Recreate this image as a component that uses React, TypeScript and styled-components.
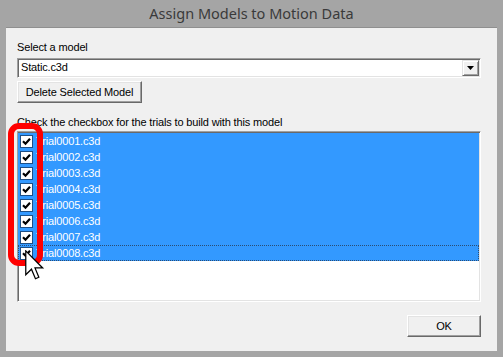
import React from "react";
import styled, { createGlobalStyle } from "styled-components";

const GlobalStyle = createGlobalStyle`
  html, body {
    margin: 0;
    padding: 0;
  }
  body {
    background: #a5a5a5;
    font-family: "Liberation Sans", Arial, sans-serif;
  }
`;

const Window = styled.div`
  position: relative;
  width: 503px;
  height: 357px;
  box-sizing: border-box;
  padding-bottom: 6px;
  display: flex;
  flex-direction: column;
  background: #a5a5a5;
  overflow: hidden;
`;

const TitleBar = styled.div`
  height: 28px;
  line-height: 27px;
  text-align: center;
  font-family: "Noto Sans", "Open Sans", sans-serif;
  font-size: 14.5px;
  color: #3a3a3a;
`;

const Client = styled.div`
  flex: 1;
  margin: -1px 6px 0;
  padding: 12px 16px 0 11px;
  display: flex;
  flex-direction: column;
  background: #f0f0f0;
  border-top: 1px solid #8f8f8f;
  font-size: 11px;
  letter-spacing: -0.15px;
  color: #000;
`;

const FieldLabel = styled.div<{ $gap?: number }>`
  margin-top: ${(p) => p.$gap ?? 0}px;
  line-height: 14px;
  white-space: nowrap;
`;

const ComboBox = styled.div`
  margin-top: 4px;
  height: 20px;
  box-sizing: border-box;
  display: flex;
  align-items: stretch;
  background: #fff;
  border: 1px solid;
  border-color: #a0a0a0 #fff #fff #a0a0a0;
  box-shadow: inset 1px 1px #696969, inset -1px -1px #e3e3e3;
`;

const ComboText = styled.div`
  flex: 1;
  padding-left: 3px;
  line-height: 17px;
`;

const DropButton = styled.div`
  width: 17px;
  margin: 1px;
  box-sizing: border-box;
  display: flex;
  align-items: center;
  justify-content: center;
  background: #f0f0f0;
  border: 1px solid;
  border-color: #e3e3e3 #696969 #696969 #e3e3e3;
  box-shadow: inset 1px 1px #fff, inset -1px -1px #a0a0a0;
`;

const PushButton = styled.button<{ $width: number }>`
  width: ${(p) => p.$width}px;
  height: 22px;
  padding: 0;
  box-sizing: border-box;
  font-family: "Liberation Sans", Arial, sans-serif;
  font-size: 11px;
  letter-spacing: -0.15px;
  color: #000;
  background: #f0f0f0;
  border: 1px solid;
  border-color: #fff #696969 #696969 #fff;
  box-shadow: inset -1px -1px #a0a0a0, inset 1px 1px #e3e3e3;
`;

const ButtonRow = styled.div<{ $gap: number; $end?: boolean }>`
  margin-top: ${(p) => p.$gap}px;
  display: flex;
  justify-content: ${(p) => (p.$end ? "flex-end" : "flex-start")};
`;

const ListBox = styled.div`
  position: relative;
  margin-top: 2px;
  height: 171px;
  box-sizing: border-box;
  padding: 1px 1px 0 0;
  background: #fff;
  border: 1px solid;
  border-color: #a0a0a0 #fff #fff #a0a0a0;
  box-shadow: inset 1px 1px #696969, inset -1px -1px #e3e3e3;
`;

const Row = styled.div<{ $focused?: boolean }>`
  height: 16px;
  display: flex;
  align-items: center;
  padding-left: 2px;
  background: #3399ff;
  color: #fff;
  outline: ${(p) => (p.$focused ? "1px dotted #2a4d75" : "none")};
  outline-offset: -1px;
`;

const CheckBox = styled.div`
  width: 13px;
  height: 13px;
  box-sizing: border-box;
  display: flex;
  align-items: center;
  justify-content: center;
  background: #fff;
  border: 1px solid #1d4f86;
`;

const RowText = styled.span`
  margin-left: 3px;
  line-height: 16px;
`;

const Highlight = styled.div`
  position: absolute;
  left: -10px;
  top: -9px;
  width: 35px;
  height: 143px;
  box-sizing: border-box;
  border: 6px solid #ff0000;
  border-radius: 11px;
  pointer-events: none;
`;

const Cursor = styled.svg`
  position: absolute;
  left: 25px;
  top: 250px;
`;

const trials = Array.from({ length: 8 }, (_, i) => `Trial000${i + 1}.c3d`);

const Check = () => (
  <svg width="9" height="9" viewBox="0 0 9 9">
    <path d="M1 4.2 L3.5 6.7 L8 1.8" stroke="#000" strokeWidth="2.2" fill="none" />
  </svg>
);

export default function App() {
  return (
    <>
      <GlobalStyle />
      <Window>
        <TitleBar>Assign Models to Motion Data</TitleBar>
        <Client>
          <FieldLabel>Select a model</FieldLabel>
          <ComboBox>
            <ComboText>Static.c3d</ComboText>
            <DropButton>
              <svg width="7" height="4" viewBox="0 0 7 4">
                <path d="M0 0 H7 L3.5 4 Z" fill="#000" />
              </svg>
            </DropButton>
          </ComboBox>
          <ButtonRow $gap={3}>
            <PushButton $width={125}>Delete Selected Model</PushButton>
          </ButtonRow>
          <FieldLabel $gap={12}>
            Check the checkbox for the trials to build with this model
          </FieldLabel>
          <ListBox>
            {trials.map((name, i) => (
              <Row key={name} $focused={i === trials.length - 1}>
                <CheckBox>
                  <Check />
                </CheckBox>
                <RowText>{name}</RowText>
              </Row>
            ))}
            <Highlight />
          </ListBox>
          <ButtonRow $gap={13} $end>
            <PushButton $width={74}>OK</PushButton>
          </ButtonRow>
        </Client>
        <Cursor width="20" height="31" viewBox="0 0 13 20">
          <path
            d="M0.5 0.5 L0.5 16 L4.2 12.4 L6.8 18.6 L9 17.6 L6.5 11.6 L11.5 11.6 Z"
            fill="#fff"
            stroke="#000"
            strokeWidth="0.8"
            strokeLinejoin="miter"
          />
        </Cursor>
      </Window>
    </>
  );
}
